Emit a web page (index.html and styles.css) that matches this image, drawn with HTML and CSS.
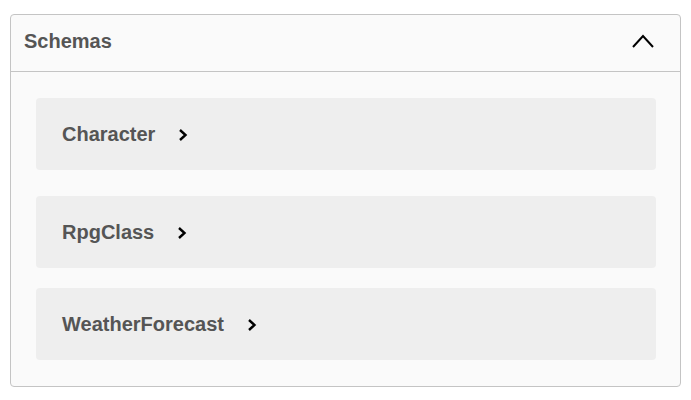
FILE: index.html
```html
<!DOCTYPE html>
<html>
<head>
<meta charset="utf-8">
<link rel="stylesheet" href="styles.css">
</head>
<body>
<section class="panel">
  <div class="panel-head">
    <h4 class="title">Schemas</h4>
    <svg class="chev-up" width="22" height="14" viewBox="0 0 22 14"><path d="M1 13 L11 2 L21 13" fill="none" stroke="#000" stroke-width="2"/></svg>
  </div>
  <div class="panel-body">
    <div class="model m1"><span class="name">Character</span><svg class="chev" width="10" height="14" viewBox="0 0 10 14"><path d="M2 2 L7.5 7 L2 12" fill="none" stroke="#000" stroke-width="2.4"/></svg></div>
    <div class="model m2"><span class="name">RpgClass</span><svg class="chev" width="10" height="14" viewBox="0 0 10 14"><path d="M2 2 L7.5 7 L2 12" fill="none" stroke="#000" stroke-width="2.4"/></svg></div>
    <div class="model m3"><span class="name">WeatherForecast</span><svg class="chev" width="10" height="14" viewBox="0 0 10 14"><path d="M2 2 L7.5 7 L2 12" fill="none" stroke="#000" stroke-width="2.4"/></svg></div>
  </div>
</section>
</body>
</html>
```
FILE: styles.css
```css
html, body { margin: 0; padding: 0; background: #fff; }
body { padding: 14px 10px 0 10px; font-family: "Liberation Sans", Arial, sans-serif; }
.panel {
  width: 669px;
  border: 1px solid #c4c4c4;
  border-radius: 4px;
  background: #fafafa;
}
.panel-head {
  height: 56px;
  border-bottom: 1px solid #c4c4c4;
  display: flex;
  align-items: center;
  justify-content: space-between;
  padding: 0 26px 0 13px;
}
.title {
  margin: -4px 0 0 0;
  font-size: 20px;
  font-weight: bold;
  color: #555;
}
.chev-up { margin-top: -4px; }
.panel-body {
  padding: 26px 24px 26px 25px;
}
.model {
  height: 72px;
  background: #eee;
  border-radius: 4px;
  display: flex;
  align-items: center;
  padding-left: 26px;
}
.m2 { margin-top: 26px; }
.m3 { margin-top: 20px; }
.name {
  font-size: 20px;
  font-weight: bold;
  color: #555;
}
.chev { margin-left: 23px; margin-top: 2px; }
```
